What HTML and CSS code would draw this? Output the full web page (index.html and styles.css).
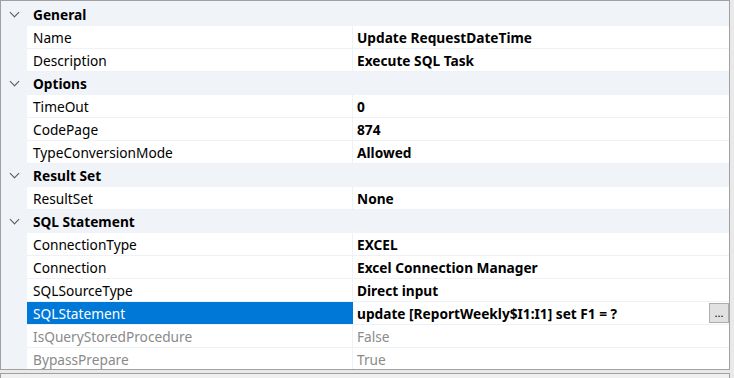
FILE: index.html
```html
<!DOCTYPE html>
<html lang="en">
  <head>
    <meta charset="UTF-8" />
    <title>Propiedades</title>
    <link rel="stylesheet" href="styles.css">
  </head>
  <body>
    <div class="panel">
      <div class="grilla">
        <!-- General -->
        <div class="categoria"><span class="flecha"></span>General</div>
        <div class="fila"><div class="nombre">Name</div><div class="valor">Update RequestDateTime</div></div>
        <div class="fila"><div class="nombre">Description</div><div class="valor">Execute SQL Task</div></div>

        <!-- Options -->
        <div class="categoria"><span class="flecha"></span>Options</div>
        <div class="fila"><div class="nombre">TimeOut</div><div class="valor">0</div></div>
        <div class="fila"><div class="nombre">CodePage</div><div class="valor">874</div></div>
        <div class="fila"><div class="nombre">TypeConversionMode</div><div class="valor">Allowed</div></div>

        <!-- Result Set -->
        <div class="categoria"><span class="flecha"></span>Result Set</div>
        <div class="fila"><div class="nombre">ResultSet</div><div class="valor">None</div></div>

        <!-- SQL Statement -->
        <div class="categoria"><span class="flecha"></span>SQL Statement</div>
        <div class="fila"><div class="nombre">ConnectionType</div><div class="valor">EXCEL</div></div>
        <div class="fila"><div class="nombre">Connection</div><div class="valor">Excel Connection Manager</div></div>
        <div class="fila"><div class="nombre">SQLSourceType</div><div class="valor">Direct input</div></div>
        <div class="fila seleccionada">
          <div class="nombre">SQLStatement</div>
          <div class="valor">update [ReportWeekly$I1:I1] set F1 = ?<button class="puntos">...</button></div>
        </div>
        <div class="fila inactiva"><div class="nombre">IsQueryStoredProcedure</div><div class="valor">False</div></div>
        <div class="fila inactiva"><div class="nombre">BypassPrepare</div><div class="valor">True</div></div>
      </div>
    </div>
    <div class="panelAbajo"></div>
  </body>
</html>
```

FILE: styles.css
```css
body {
  margin: 0;
  background: #e9e9e9;
  font-family: "Noto Sans", "Open Sans", sans-serif;
  font-size: 13.7px;
  color: #000;
}

.panel {
  width: 728px;
  height: 368px;
  border: 1px solid #a0a0a0;
  background: #f0f3f8;
  overflow: hidden;
}

.grilla {
  padding-top: 2px;
}

.categoria {
  height: 22px;
  border-bottom: 1px solid #f0f3f8;
  display: flex;
  align-items: center;
  padding-left: 8px;
  font-weight: bold;
  background: #f0f3f8;
}

.flecha {
  width: 6px;
  height: 6px;
  border-right: 1.5px solid #555;
  border-bottom: 1.5px solid #555;
  transform: rotate(45deg);
  margin: -4px 15px 0 2px;
}

.fila {
  display: flex;
  height: 22px;
  margin-left: 26px;
  background: #fff;
  border-bottom: 1px solid #eef1f6;
}

.nombre {
  width: 319px;
  padding-left: 6px;
  border-right: 1px solid #eef1f6;
  display: flex;
  align-items: center;
}

.valor {
  flex: 1;
  display: flex;
  align-items: center;
  padding-left: 4px;
  font-weight: bold;
  position: relative;
}

.seleccionada .nombre {
  background: #0078d7;
  color: #fff;
  border-right-color: #0078d7;
}

.inactiva {
  color: #8a8a8a;
}

.inactiva .valor {
  font-weight: normal;
}

.puntos {
  position: absolute;
  right: 0;
  top: 1px;
  width: 20px;
  height: 20px;
  padding: 0;
  background: #e1e1e1;
  border: 1px solid #adadad;
  font-family: "Noto Sans", sans-serif;
  font-size: 11px;
  line-height: 14px;
  color: #000;
}

.panelAbajo {
  margin-top: 3px;
  width: 728px;
  height: 8px;
  border: 1px solid #a0a0a0;
  background: #f0f0f0;
}
```
